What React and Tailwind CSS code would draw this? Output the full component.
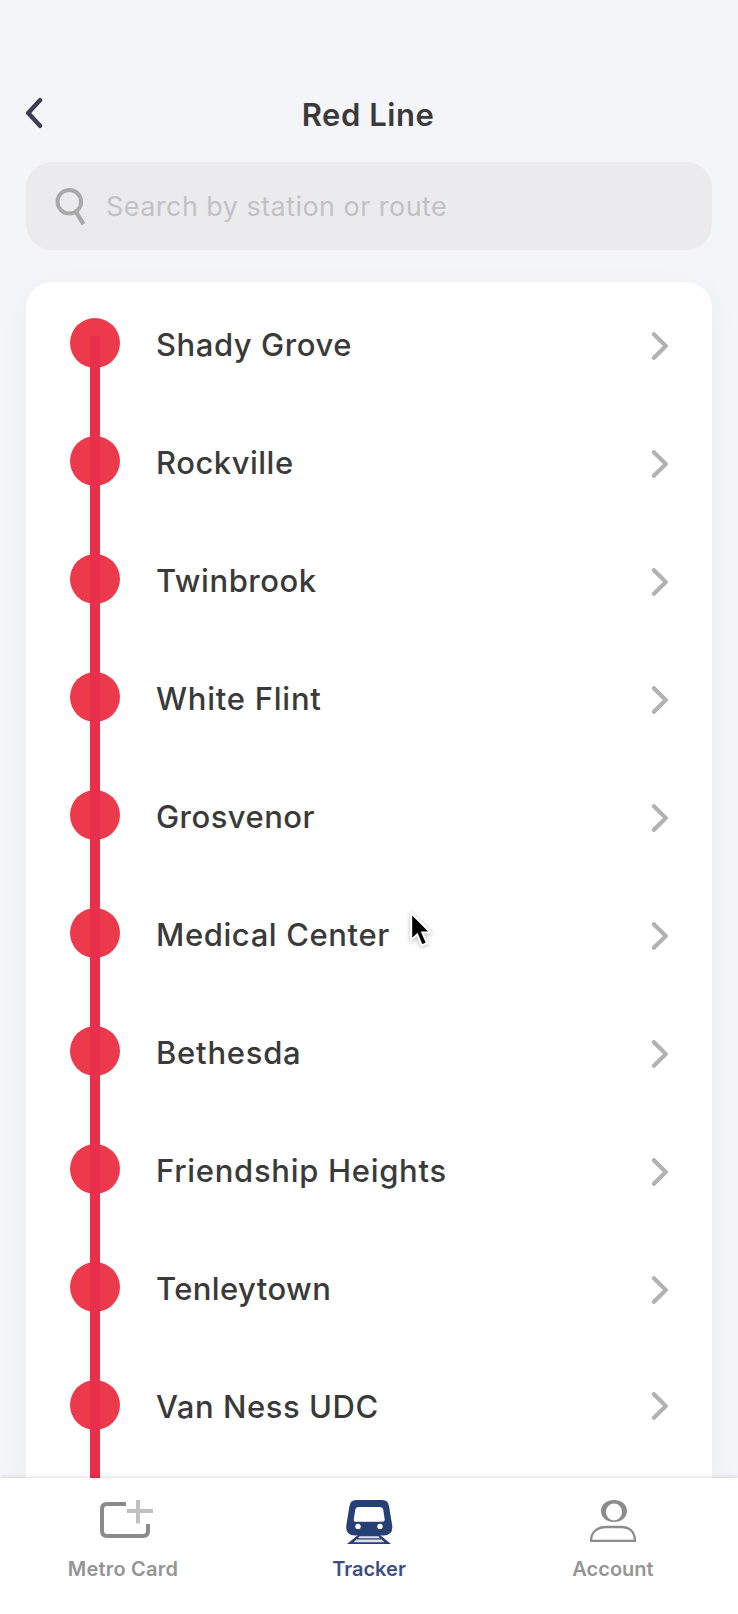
const stations = [
  { name: "Shady Grove", tracking: "tracking-[0.55px]" },
  { name: "Rockville", tracking: "tracking-[0.5px]" },
  { name: "Twinbrook", tracking: "tracking-[0.55px]" },
  { name: "White Flint", tracking: "tracking-[0.75px]" },
  { name: "Grosvenor", tracking: "tracking-[0.45px]" },
  { name: "Medical Center", tracking: "tracking-[0.6px]" },
  { name: "Bethesda", tracking: "tracking-[0.75px]" },
  { name: "Friendship Heights", tracking: "tracking-[0.7px]" },
  { name: "Tenleytown", tracking: "tracking-[0.4px]" },
  { name: "Van Ness UDC", tracking: "tracking-[0.55px]" },
];

function BackIcon() {
  return (
    <svg className="h-[32px] w-[18px]" viewBox="0 0 18 32" fill="none" stroke="#3c3d52" strokeWidth="4.400" strokeLinecap="round" strokeLinejoin="round">
      <path d="M15 3.200 3.200 16l11.800 12.800" />
    </svg>
  );
}

function SearchIcon() {
  return (
    <svg className="h-[40px] w-[32px]" viewBox="0 0 32 40" fill="none" stroke="#a9a9a9" strokeWidth="4">
      <circle cx="14.300" cy="15.700" r="11.800" />
      <path d="M20.500 25.200 28.500 38.200" strokeWidth="4.4" />
    </svg>
  );
}

function ChevronIcon() {
  return (
    <svg className="h-[28px] w-[17px]" viewBox="0 0 17 28" fill="none" stroke="#b2b2b2" strokeWidth="4.200" strokeLinecap="round" strokeLinejoin="round">
      <path d="M1.900 2.200 13.800 14 1.900 25.800" />
    </svg>
  );
}

function CardIcon() {
  return (
    <svg className="h-[44px] w-[54px]" viewBox="0 0 54 44" fill="none" strokeWidth="4">
      <path d="M26 4H7Q2 4 2 9V31Q2 36 7 36H43Q48 36 48 31V24" stroke="#8b8b8b" />
      <path d="M38 0V23.500M27 11H53" stroke="#c0c0c0" />
    </svg>
  );
}

function TrainIcon() {
  return (
    <svg className="h-[44px] w-[48px]" viewBox="0 0 48 44">
      <path fill="#263f75" d="M11 0H37.500Q43 0 44 6L47.300 26Q47.800 35.500 38.500 35.500H10Q.7 35.500 1.200 26L4.500 6Q5.500 0 11 0Z" />
      <path fill="#fff" d="M14 7H34.500Q37.800 7 38.300 10L39.700 19.500Q39.900 21.800 37.500 21.800H11Q8.600 21.800 8.800 19.500L10.200 10Q10.700 7 14 7Z" />
      <circle cx="13" cy="26.400" r="2.700" fill="#fff" />
      <circle cx="35" cy="26.400" r="2.700" fill="#fff" />
      <path fill="#263f75" d="M13 35H35L46 44H2Z" />
      <path fill="#dbe0eb" d="M14.500 36.200H33.500L35 38.200H13ZM11.500 39.400H36.500L39.500 42.200H8.500Z" />
    </svg>
  );
}

function AccountIcon() {
  return (
    <svg className="h-[44px] w-[46px]" viewBox="0 0 46 44" fill="none" stroke="#8c8c8c" strokeWidth="2.300">
      <path fill="#8c8c8c" stroke="none" fillRule="evenodd" d="M24 0C31.500 0 37 4.500 37 11S31.500 22 24 22 11 17.500 11 11 16.500 0 24 0ZM24 3.600A8 8.400 0 1 0 24 20.400 8 8.400 0 1 0 24 3.600Z" />
      <path d="M1.150 40.800V39C1.800 31.500 8 27 16 27H31C39 27 44.300 31.500 44.850 39V40.800Z" />
    </svg>
  );
}

function Cursor() {
  return (
    <svg className="absolute top-[911px] left-[407px] h-[42px] w-[32px] drop-shadow-[0_1px_2px_rgba(0,0,0,0.3)]" viewBox="0 0 32 42">
      <path d="M4.200 2V29L10.200 23.500 14.700 34.300 20 32.100 15.300 21.500H23.500Z" fill="#000" stroke="#fff" strokeWidth="2" />
    </svg>
  );
}

function Station({ name, tracking }) {
  return (
    <li className="group flex h-[118px] shrink-0 items-start">
      <span className="h-[50px] w-[50px] shrink-0 rounded-full bg-[#ec394b]" />
      <span className={`ml-[36px] flex-1 text-[31px] leading-[53px] font-medium text-[#3a3a3a] ${tracking}`}>{name}</span>
      <span className="mt-[14px] group-nth-[10]:mt-[12px]">
        <ChevronIcon />
      </span>
    </li>
  );
}

export default function App() {
  return (
    <div className="relative flex h-[1614px] w-[738px] flex-col overflow-hidden bg-[#f4f5f9] font-[Inter,'Liberation_Sans',sans-serif]">
      <header className="grid h-[162px] shrink-0 grid-cols-[1fr_auto_1fr] items-start pr-[27px] pl-[25px]">
        <button aria-label="Back" className="mt-[97px] w-[18px]">
          <BackIcon />
        </button>
        <h1 className="mt-[90px] text-[31px] leading-[50px] font-semibold tracking-[0.55px] text-[#3a3a3a]">Red Line</h1>
      </header>
      <div className="mx-[26px] flex h-[88px] shrink-0 items-center rounded-[26px] bg-[#ebebed] pl-[29px]">
        <SearchIcon />
        <span className="mt-[2px] ml-[19px] text-[27px] tracking-[0.45px] text-[#c2c2c4]">Search by station or route</span>
      </div>
      <main className="mx-[26px] mt-[32px] h-[1196px] shrink-0 overflow-hidden rounded-t-[26px] bg-white pt-[36px] pr-[43px] pl-[44px] shadow-[0_8px_28px_rgba(70,80,80,0.05)]">
        <ul className="relative flex flex-col">
          {stations.map((station) => (
            <Station key={station.name} {...station} />
          ))}
          <li aria-hidden="true" className="absolute top-[18px] left-[20px] h-[1180px] w-[10px] bg-[#e8304c]" />
        </ul>
      </main>
      <nav className="relative flex h-[136px] shrink-0 justify-between bg-white pt-[22px] text-[20px] font-semibold text-[#959595] shadow-[0_-1px_4px_rgba(0,0,0,0.14)]">
        <a className="flex w-[246px] flex-col items-center">
          <span className="ml-[7px]"><CardIcon /></span>
          <span className="mt-[11px] leading-[28px] tracking-[0.2px]">Metro Card</span>
        </a>
        <a className="flex w-[246px] flex-col items-center text-[#3a4f80]">
          <TrainIcon />
          <span className="mt-[11px] leading-[28px]">Tracker</span>
        </a>
        <a className="flex w-[246px] flex-col items-center pr-[4px]">
          <AccountIcon />
          <span className="mt-[11px] leading-[28px]">Account</span>
        </a>
      </nav>
      <Cursor />
    </div>
  );
}
